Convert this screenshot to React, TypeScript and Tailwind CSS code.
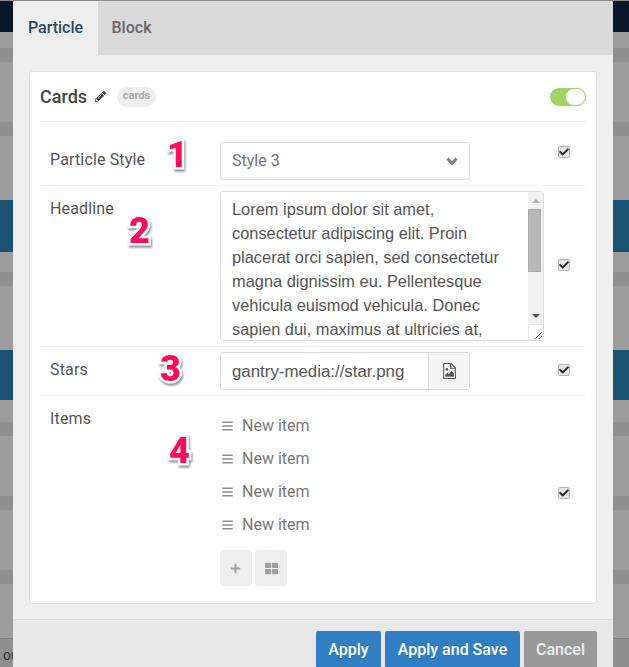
import * as React from 'react';
import { FaCheck, FaBars, FaPlus, FaThLarge, FaPencilAlt } from 'react-icons/fa';

const LINES = [
  'Lorem ipsum dolor sit amet,',
  'consectetur adipiscing elit. Proin',
  'placerat orci sapien, sed consectetur',
  'magna dignissim eu. Pellentesque',
  'vehicula euismod vehicula. Donec',
  'sapien dui, maximus at ultricies at,',
];

const Band = ({ h, c }: { h: string; c: string }) => <div className={`${h} ${c} shrink-0`} />;

const Backdrop = ({ width, label }: { width: string; label?: boolean }) => (
  <div className={`${width} h-full shrink-0 flex flex-col bg-[#9c9c9c] overflow-hidden`}>
    <Band h="h-[31px]" c="bg-[#0a1629]" />
    <Band h="h-[16px]" c="bg-[#9c9c9c]" />
    <Band h="h-[14px]" c="bg-[#8f8f8f]" />
    <Band h="h-[60px]" c="bg-[#9c9c9c]" />
    <Band h="h-[14px]" c="bg-[#8f8f8f]" />
    <Band h="h-[64px]" c="bg-[#9c9c9c]" />
    <Band h="h-[52px]" c="bg-[#1a5274]" />
    <Band h="h-[20px]" c="bg-[#9c9c9c]" />
    <Band h="h-[14px]" c="bg-[#8f8f8f]" />
    <Band h="h-[64px]" c="bg-[#9c9c9c]" />
    <Band h="h-[50px]" c="bg-[#1a5274]" />
    <Band h="h-[22px]" c="bg-[#9c9c9c]" />
    <Band h="h-[14px]" c="bg-[#8f8f8f]" />
    <Band h="h-[60px]" c="bg-[#9c9c9c]" />
    <Band h="h-[14px]" c="bg-[#8f8f8f]" />
    <Band h="h-[60px]" c="bg-[#9c9c9c]" />
    <Band h="h-[14px]" c="bg-[#8f8f8f]" />
    <Band h="h-[54px]" c="bg-[#9c9c9c]" />
    <div className="flex-1 border-t border-[#7f7f7f] bg-[#8f8f8f] pl-[3px] pt-[8px] text-[14px] leading-4 text-[#333] font-['Roboto',sans-serif]">
      {label ? 'ou' : ''}
    </div>
  </div>
);

const Check = () => (
  <div className="w-[12px] h-[12px] rounded-[2px] border border-[#b5b5b5] bg-[#e6e6e6] flex items-center justify-center text-[#2a2a2a]">
    <FaCheck className="w-[10px] h-[10px]" />
  </div>
);

const Num = ({ n, className }: { n: string; className: string }) => (
  <span
    className={`absolute text-[36px] leading-none font-black text-[#ff0a5c] font-['Roboto',sans-serif] [-webkit-text-stroke:5px_#fff] [paint-order:stroke_fill] [filter:drop-shadow(1px_2px_1px_rgba(0,0,0,0.45))] ${className}`}
  >
    {n}
  </span>
);

const Row = ({ label, labelClass, check, children, num, className }: {
  label: string;
  labelClass: string;
  check: string;
  children: React.ReactNode;
  num: React.ReactNode;
  className: string;
}) => (
  <div className={`relative flex border-b border-[#f0f0f0] ${className}`}>
    <div className={`w-[180px] shrink-0 pl-[10px] text-[16px] leading-6 tracking-[0.15px] text-[#555] ${labelClass}`}>{label}</div>
    <div className="w-[324px] shrink-0">{children}</div>
    <div className={`pl-[14px] ${check}`}><Check /></div>
    {num}
  </div>
);

export default function App() {
  return (
    <div className="w-[629px] h-[667px] overflow-hidden flex flex-col bg-[#9c9c9c] font-['Roboto',sans-serif]">
      <div className="h-px shrink-0 bg-[#8a8a8a]" />
      <div className="flex flex-1 min-h-0">
        <Backdrop width="w-[13px]" label />

        <div className="w-[600px] shrink-0 flex flex-col bg-[#eeeeee] rounded-t-[3px]">
          {/* Tabs */}
          <div className="h-[54px] shrink-0 flex bg-[#d9d9d9] rounded-t-[3px] text-[16px] font-medium">
            <div className="w-[85px] bg-[#eeeeee] rounded-tl-[3px] flex items-center justify-center text-[#2b4a5e]">Particle</div>
            <div className="w-[67px] flex items-center justify-center text-[#666]">Block</div>
          </div>

          {/* Card */}
          <div className="mx-[16px] mt-[16px] h-[533px] shrink-0 bg-white border border-[#dddddd] rounded-[3px] px-[10px]">
            <div className="h-[50px] flex items-center border-b border-[#eeeeee]">
              <span className="text-[18px] font-medium text-[#444]">Cards</span>
              <FaPencilAlt className="ml-[8px] w-[11px] h-[11px] text-[#444]" />
              <span className="ml-[11px] h-[20px] w-[39px] rounded-full bg-[#eeeeee] flex items-center justify-center text-[11px] font-bold text-[#aaaaaa]">cards</span>
              <div className="ml-auto w-[36px] h-[18px] rounded-full bg-[#a0d468] flex justify-end">
                <div className="w-[21px] h-[18px] rounded-full bg-white border border-[#a0d468]" />
              </div>
            </div>

            <Row
              label="Particle Style"
              labelClass="pt-[26px]"
              check="pt-[24px]"
              className="h-[64px]"
              num={<Num n="1" className="left-[127px] top-[15px]" />}
            >
              <div className="mt-[20px] w-[250px] h-[38px] border border-[#dddddd] rounded-[3px] flex items-center justify-between pl-[11px] pr-[11px] text-[16px] text-[#777]">
                <span>Style 3</span>
                <svg width="12" height="9" viewBox="0 0 12 9" className="text-[#808080]">
                  <path d="M1.5 1.5 6 6.5l4.5-5" stroke="currentColor" strokeWidth="3" fill="none" />
                </svg>
              </div>
            </Row>

            <Row
              label="Headline"
              labelClass="pt-[11px]"
              check="pt-[73px]"
              className="h-[161px]"
              num={<Num n="2" className="left-[89px] top-[27px]" />}
            >
              <div className="mt-[5px] w-[324px] h-[150px] border border-[#dddddd] rounded-[3px] flex overflow-hidden">
                <div className="flex-1 pl-[11px] pt-[5px] text-[16.4px] leading-6 text-[#555] font-['Liberation_Sans',sans-serif] whitespace-nowrap overflow-hidden">
                  {LINES.map((l) => <div key={l}>{l}</div>)}
                </div>
                <div className="w-[15px] shrink-0 flex flex-col bg-[#f1f1f1]">
                  <div className="h-[17px] flex items-center justify-center">
                    <div className="w-0 h-0 border-x-[4px] border-x-transparent border-b-[4px] border-b-[#b0b0b0]" />
                  </div>
                  <div className="h-[63px] w-[13px] bg-[#b8b8b8] border border-[#aaaaaa]" />
                  <div className="h-[36px]" />
                  <div className="h-[16px] flex items-center justify-center">
                    <div className="w-0 h-0 border-x-[4px] border-x-transparent border-t-[4px] border-t-[#505050]" />
                  </div>
                  <div className="flex-1 bg-white border-l border-t border-[#e8e8e8] flex items-end justify-end">
                    <svg width="10" height="10" viewBox="0 0 10 10" className="text-[#666]">
                      <path d="M9 2 2 9M9 6 6 9" stroke="currentColor" strokeWidth="1" fill="none" />
                    </svg>
                  </div>
                </div>
              </div>
            </Row>

            <Row
              label="Stars"
              labelClass="pt-[11px]"
              check="pt-[17px]"
              className="h-[49px]"
              num={<Num n="3" className="left-[120px] top-[4px]" />}
            >
              <div className="mt-[5px] w-[250px] h-[38px] border border-[#dddddd] rounded-[3px] flex text-[16.85px] text-[#555] font-['Liberation_Sans',sans-serif]">
                <div className="flex-1 pl-[11px] pt-px flex items-center whitespace-nowrap">gantry-media://star.png</div>
                <div className="w-[41px] bg-[#f5f5f5] border-l border-[#dddddd] flex items-center justify-center rounded-r-[3px]">
                  <svg width="13" height="16" viewBox="0 0 12 15" className="text-[#555]">
                    <path d="M1 .5h6.5L11.5 4.5V14.5H.5V1z" fill="none" stroke="currentColor" />
                    <path d="M7 .5V5h4.5" fill="none" stroke="currentColor" />
                    <circle cx="3.5" cy="6" r="1.3" fill="currentColor" />
                    <path d="M2 13v-2l2-2 1.5 1.5L8 7.5l2 2V13z" fill="currentColor" />
                  </svg>
                </div>
              </div>
            </Row>

            <div className="relative flex">
              <div className="w-[180px] shrink-0 pl-[10px] pt-[11px] text-[16px] leading-6 tracking-[0.15px] text-[#555]">Items</div>
              <div className="w-[324px] shrink-0 pt-[13px]">
                {[0, 1, 2, 3].map((i) => (
                  <div key={i} className="h-[33px] flex items-center text-[16px] text-[#777]">
                    <FaBars className="ml-[2px] w-[11px] h-[12px] text-[#8c8c8c]" />
                    <span className="ml-[9px]">New item</span>
                  </div>
                ))}
                <div className="mt-[9px] flex gap-[3px]">
                  <div className="w-[32px] h-[36px] rounded-[3px] bg-[#eeeeee] flex items-center justify-center">
                    <FaPlus className="w-[11px] h-[11px] -ml-[1px] text-[#a0a0a0]" />
                  </div>
                  <div className="w-[32px] h-[36px] rounded-[3px] bg-[#eeeeee] flex items-center justify-center">
                    <FaThLarge className="w-[13px] h-[13px] text-[#a0a0a0]" />
                  </div>
                </div>
              </div>
              <div className="pl-[14px] pt-[91px]"><Check /></div>
              <Num n="4" className="left-[129px] top-[37px]" />
            </div>
          </div>

          {/* Footer */}
          <div className="mt-[15px] flex-1 min-h-0 bg-[#e8e8e8] border-t border-[#dddddd] flex justify-end gap-[4px] pt-[11px] pr-[16px] text-[16px] font-medium text-white">
            <div className="w-[65px] h-[37px] pt-px rounded-[2px] bg-[#317fc2] flex items-center justify-center">Apply</div>
            <div className="w-[135px] h-[37px] pt-px rounded-[2px] bg-[#317fc2] flex items-center justify-center">Apply and Save</div>
            <div className="w-[73px] h-[37px] pt-px rounded-[2px] bg-[#999999] flex items-center justify-center text-[#eeeeee]">Cancel</div>
          </div>
        </div>

        <Backdrop width="w-[16px]" />
      </div>
    </div>
  );
}
